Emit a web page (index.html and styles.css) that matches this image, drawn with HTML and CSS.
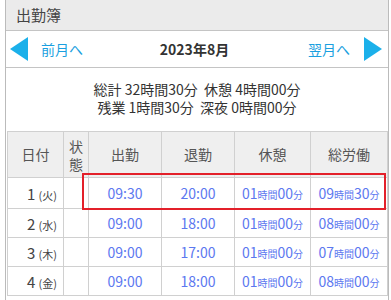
FILE: index.html
```html
<!DOCTYPE html>
<html lang="ja">
<head>
    <meta charset="UTF-8">
    <meta name="viewport" content="width=device-width, initial-scale=1.0">
    <title>出勤簿</title>
    <link rel="stylesheet" href="styles.css">
</head>
<body>
    <div class="panel">
        <header class="title-bar">出勤簿</header>

        <nav class="month-nav">
            <a class="nav-link prev" href="#"><span class="arrow arrow-left"></span>前月へ</a>
            <span class="month">2023年8月</span>
            <a class="nav-link next" href="#">翌月へ<span class="arrow arrow-right"></span></a>
        </nav>

        <div class="summary">
            <p>総計 32時間30分&nbsp;&nbsp;休憩 4時間00分</p>
            <p>残業 1時間30分&nbsp;&nbsp;深夜 0時間00分</p>
        </div>

        <div class="table-wrap">
            <table class="attendance">
                <colgroup>
                    <col class="c-date">
                    <col class="c-state">
                    <col class="c-in">
                    <col class="c-out">
                    <col class="c-rest">
                    <col class="c-total">
                </colgroup>
                <thead>
                    <tr>
                        <th>日付</th>
                        <th class="state">状態</th>
                        <th>出勤</th>
                        <th>退勤</th>
                        <th>休憩</th>
                        <th>総労働</th>
                    </tr>
                </thead>
                <tbody>
                    <tr class="first">
                        <td class="date">1 <small>(火)</small></td>
                        <td></td>
                        <td class="time">09:30</td>
                        <td class="time">20:00</td>
                        <td class="time">01<small>時間</small>00<small>分</small></td>
                        <td class="time">09<small>時間</small>30<small>分</small></td>
                    </tr>
                    <tr>
                        <td class="date">2 <small>(水)</small></td>
                        <td></td>
                        <td class="time">09:00</td>
                        <td class="time">18:00</td>
                        <td class="time">01<small>時間</small>00<small>分</small></td>
                        <td class="time">08<small>時間</small>00<small>分</small></td>
                    </tr>
                    <tr>
                        <td class="date">3 <small>(木)</small></td>
                        <td></td>
                        <td class="time">09:00</td>
                        <td class="time">17:00</td>
                        <td class="time">01<small>時間</small>00<small>分</small></td>
                        <td class="time">07<small>時間</small>00<small>分</small></td>
                    </tr>
                    <tr>
                        <td class="date">4 <small>(金)</small></td>
                        <td></td>
                        <td class="time">09:00</td>
                        <td class="time">18:00</td>
                        <td class="time">01<small>時間</small>00<small>分</small></td>
                        <td class="time">08<small>時間</small>00<small>分</small></td>
                    </tr>
                </tbody>
            </table>
            <div class="highlight"></div>
        </div>
    </div>
</body>
</html>
```

FILE: styles.css
```css
body {
    margin: 0;
    padding: 0;
    background-color: #ffffff;
    font-family: "Noto Sans CJK JP", "Noto Sans", sans-serif;
    color: #333333;
    overflow: hidden;
}
.panel {
    margin: 0 2px 0 5px;
    border-left: 1px solid #bbbbbb;
    border-right: 1px solid #bbbbbb;
    height: 300px;
}
.title-bar {
    height: 31px;
    box-sizing: border-box;
    background-color: #ebebeb;
    border-bottom: 1px solid #c4c4c4;
    padding: 0 10px;
    font-size: 15px;
    line-height: 30px;
    color: #444444;
}
.month-nav {
    height: 37px;
    box-sizing: border-box;
    border-bottom: 1px solid #c4c4c4;
    display: flex;
    align-items: center;
    justify-content: space-between;
    padding: 0 6px 0 4px;
}
.nav-link {
    display: flex;
    align-items: center;
    color: #1a9fe0;
    text-decoration: none;
    font-size: 14px;
}
.prev {
    gap: 13px;
}
.next {
    gap: 14px;
}
.arrow {
    width: 0;
    height: 0;
    border-top: 12px solid transparent;
    border-bottom: 12px solid transparent;
}
.arrow-left {
    border-right: 18px solid #1bb0ea;
}
.arrow-right {
    border-left: 18px solid #1bb0ea;
}
.month {
    font-size: 14px;
    font-weight: bold;
    color: #333333;
    margin-right: 2px;
}
.summary {
    padding: 12px 0 0;
    height: 51px;
    text-align: center;
    font-size: 14px;
    line-height: 18px;
    color: #333333;
}
.summary p {
    margin: 0;
}
.table-wrap {
    position: relative;
    padding: 0 2px 0 1px;
}
.attendance {
    width: 380px;
    border-collapse: collapse;
    table-layout: fixed;
    font-size: 14px;
}
.c-date { width: 56px; }
.c-state { width: 25px; }
.c-in { width: 73px; }
.c-out { width: 73px; }
.c-rest { width: 76px; }
.c-total { width: 77px; }
.attendance th,
.attendance td {
    border: 1px solid #d0d0d0;
    padding: 0;
    text-align: center;
}
.attendance th {
    height: 45px;
    background-color: #efefef;
    color: #555555;
    font-weight: normal;
    font-size: 14px;
    line-height: 17px;
}
.attendance th.state {
    line-height: 18px;
    word-break: break-all;
}
.attendance td {
    height: 28px;
}
.attendance tr.first td {
    height: 30px;
}
.attendance td.date {
    text-align: right;
    padding-right: 6px;
    font-size: 15px;
    color: #444444;
}
.date small {
    font-size: 11px;
}
.time {
    color: #5c78f0;
}
.time small {
    font-size: 10px;
}
.highlight {
    position: absolute;
    left: 76px;
    top: 42px;
    width: 300px;
    height: 33px;
    border: 2px solid #e3202a;
    pointer-events: none;
}
```
